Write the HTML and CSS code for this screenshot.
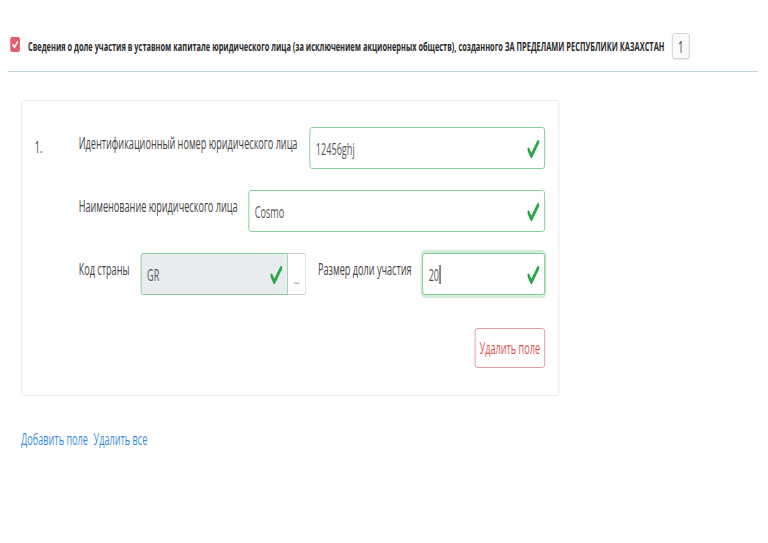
FILE: index.html
```html
<!DOCTYPE html>
<html lang="ru">
<head>
<meta charset="utf-8">
<title>Сведения о доле участия</title>
<link rel="stylesheet" href="styles.css">
</head>
<body>
<div class="frame">
<div class="page">
  <div class="header">
    <span class="chk">
      <svg viewBox="0 0 16 16" width="17" height="15" preserveAspectRatio="none"><path d="M4.3 8.4 L7 10.8 L11.8 5.3" fill="none" stroke="#fff" stroke-width="2.2" stroke-linecap="round" stroke-linejoin="round"/></svg>
    </span>
    <span class="title">Сведения о доле участия в уставном капитале юридического лица (за исключением акционерных обществ), созданного ЗА ПРЕДЕЛАМИ РЕСПУБЛИКИ КАЗАХСТАН</span>
    <span class="badge">1</span>
  </div>

  <div class="card">
    <div class="num">1.</div>
    <div class="fields">
      <div class="row">
        <label class="lbl w1">Идентификационный номер юридического лица</label>
        <div class="inp valid grow"><span class="val">12456ghj</span><span class="ok"></span></div>
      </div>
      <div class="row">
        <label class="lbl w2">Наименование юридического лица</label>
        <div class="inp valid grow"><span class="val">Cosmo</span><span class="ok"></span></div>
      </div>
      <div class="row">
        <label class="lbl w3">Код страны</label>
        <div class="group">
          <div class="inp valid ro grow"><span class="val">GR</span><span class="ok"></span></div>
          <button class="dots">...</button>
        </div>
        <label class="lbl w4">Размер доли участия</label>
        <div class="inp valid focus grow"><span class="val">20</span><span class="caret"></span><span class="ok"></span></div>
      </div>
      <div class="actions">
        <button class="del">Удалить поле</button>
      </div>
    </div>
  </div>

  <div class="links">
    <a href="#">Добавить поле</a>
    <a href="#">Удалить все</a>
  </div>
</div>
</div>
</body>
</html>
```

FILE: styles.css
```css
html, body {
  margin: 0;
  padding: 0;
  overflow: hidden;
  background: #fff;
}
.frame {
  width: 768px;
  height: 543px;
  overflow: hidden;
}
.page {
  width: 1347px;
  transform: scaleX(0.57);
  transform-origin: 0 0;
  font-family: "Open Sans", "Noto Sans", sans-serif;
  color: #333;
}
.header {
  margin: 0 17px 0 14px;
  padding: 33px 0 12px 4px;
  border-bottom: 1px solid #bcd5de;
  display: flex;
  align-items: center;
}
.chk {
  width: 17px;
  height: 15px;
  border-radius: 3px;
  background: #e05d69;
  display: flex;
  margin-top: -3px;
}
.title {
  margin-left: 14px;
  font-size: 13px;
  font-weight: 700;
  color: #2b2b2b;
  white-space: nowrap;
}
.badge {
  margin-left: 13px;
  width: 31px;
  height: 26px;
  box-sizing: border-box;
  border: 1px solid #c8c8c8;
  border-radius: 4px;
  background: #f9f9f9;
  box-shadow: 0 1px 1px rgba(0,0,0,0.08);
  display: flex;
  align-items: center;
  justify-content: center;
  font-size: 17px;
  color: #444;
}
.card {
  margin: 28px 0 0 37px;
  width: 944px;
  box-sizing: border-box;
  border: 1px solid #e4e6e8;
  border-radius: 4px;
  padding: 26px 24px 27px 0;
  display: flex;
}
.num {
  width: 100px;
  padding-left: 23px;
  box-sizing: border-box;
  font-size: 16px;
  padding-top: 9px;
  color: #444;
}
.fields {
  flex: 1;
  display: flex;
  flex-direction: column;
}
.row {
  display: flex;
  align-items: flex-start;
  margin-bottom: 21px;
}
.lbl {
  font-size: 16px;
  line-height: 20px;
  padding-top: 6px;
  color: #444;
  white-space: nowrap;
  box-sizing: border-box;
  flex: none;
}
.w1 { width: 405px; }
.w2 { width: 298px; }
.w3 { width: 109px; }
.w4 { width: 204px; padding-left: 21px; }
.inp {
  height: 42px;
  box-sizing: border-box;
  border: 1px solid #ced4da;
  border-radius: 4px;
  background: #fff;
  display: flex;
  align-items: center;
  padding: 0 8px 0 10px;
  font-size: 16px;
  color: #555;
  min-width: 0;
}
.grow { flex: 1; }
.valid { border-color: #6cc07c; }
.ro { background: #e9ecef; border-radius: 4px 0 0 4px; }
.focus { box-shadow: 0 0 0 3px rgba(40,167,69,0.22); }
.val { padding-top: 2px; }
.caret {
  width: 2px;
  height: 19px;
  background: #333;
  margin-left: 1px;
}
.ok {
  margin-left: auto;
  width: 22px;
  height: 19px;
  background: no-repeat center / 100% 100% url("data:image/svg+xml,%3csvg xmlns='http://www.w3.org/2000/svg' viewBox='0.4 1 7.4 6.2' preserveAspectRatio='none'%3e%3cpath fill='%2328a745' d='M2.3 6.73L.6 4.53c-.4-1.04.46-1.4 1.1-.8l1.1 1.4 3.4-3.8c.6-.63 1.6-.27 1.2.7l-4 4.6c-.43.5-.8.4-1.1.1z'/%3e%3c/svg%3e");
  margin-top: 2px;
}
.group {
  width: 290px;
  flex: none;
  display: flex;
}
.dots {
  width: 32px;
  height: 42px;
  flex: none;
  box-sizing: border-box;
  border: 1px solid #c7ccd1;
  border-left: none;
  border-radius: 0 4px 4px 0;
  background: #fff;
  color: #666;
  font-size: 12px;
  padding: 10px 0 0 0;
  font-family: inherit;
}
.actions {
  display: flex;
  justify-content: flex-end;
  margin-top: 12px;
}
.del {
  width: 123px;
  height: 40px;
  border: 1px solid #e0818a;
  border-radius: 4px;
  background: #fff;
  color: #d9534f;
  font-family: inherit;
  font-size: 16px;
  padding: 0;
  white-space: nowrap;
}
.links {
  margin: 32px 0 0 37px;
  display: flex;
  gap: 10px;
  font-size: 16px;
}
.links a {
  color: #3b8de0;
  text-decoration: none;
}
```
